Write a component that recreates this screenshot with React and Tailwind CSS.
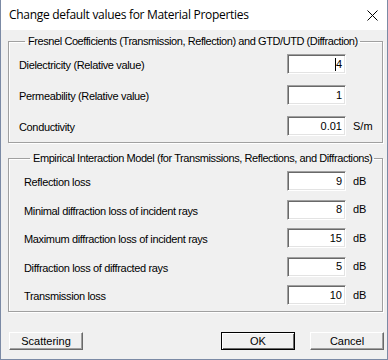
import React from "react";

const font = { fontFamily: '"Liberation Sans", Arial, sans-serif' };

// sunken edit box like the classic Win32 control
const EditBox = ({ value, caret }) => (
  <div className="w-[59px] h-[20px] bg-white border border-t-[#a0a0a0] border-l-[#a0a0a0] border-b-white border-r-white shadow-[inset_1px_1px_0_#696969,inset_-1px_-1px_0_#e3e3e3] flex items-center justify-end pr-[3px] text-[11px] text-black">
    {caret && <span className="inline-block w-[1px] h-[13px] bg-black" />}
    <span>{value}</span>
  </div>
);

const Row = ({ label, value, unit, caret }) => (
  <div className="flex items-center h-[20px]">
    <div className="flex-1 text-[11px] tracking-[-0.35px] whitespace-nowrap text-black pt-[3px]">
      {label}
    </div>
    <EditBox value={value} caret={caret} />
    <div className="w-[36px] pl-[7px] text-[11px] text-black">{unit}</div>
  </div>
);

const GroupBox = ({ title, children, className }) => (
  <fieldset
    className={
      "border border-[#a0a0a0] shadow-[inset_1px_1px_0_#fff,1px_1px_0_#fff] " +
      className
    }
  >
    <legend className="ml-[6px] pl-[3px] pr-[2px] text-[11px] leading-[13px] tracking-[-0.42px] whitespace-nowrap text-black">
      {title}
    </legend>
    {children}
  </fieldset>
);

const Button = ({ children, isDefault }) => (
  <button
    className={
      "w-[74px] h-[18px] bg-[#f0f0f0] text-[11px] text-black flex items-center justify-center border " +
      (isDefault
        ? "border-black shadow-[inset_1px_1px_0_#fff,inset_-1px_-1px_0_#696969]"
        : "border-t-white border-l-white border-b-[#696969] border-r-[#696969] shadow-[inset_-1px_-1px_0_#a0a0a0]")
    }
  >
    {children}
  </button>
);

export default function App() {
  const fresnel = [
    { label: "Dielectricity (Relative value)", value: "4", caret: true },
    { label: "Permeability (Relative value)", value: "1" },
    { label: "Conductivity", value: "0.01", unit: "S/m" },
  ];
  const empirical = [
    { label: "Reflection loss", value: "9" },
    { label: "Minimal diffraction loss of incident rays", value: "8" },
    { label: "Maximum diffraction loss of incident rays", value: "15" },
    { label: "Diffraction loss of diffracted rays", value: "5" },
    { label: "Transmission loss", value: "10" },
  ];

  return (
    <div
      className="w-[388px] h-[360px] flex flex-col bg-[#f0f0f0] border-l border-r border-b border-[#7b8aa5] overflow-hidden"
      style={font}
    >
      {/* Title bar */}
      <div className="h-[30px] shrink-0 bg-white flex items-center justify-between pl-[8px] pr-[9px]">
        <span
          className="text-[12px] tracking-[-0.3px] text-black"
          style={{ fontFamily: '"Open Sans", "Noto Sans", sans-serif' }}
        >
          Change default values for Material Properties
        </span>
        <svg width="11" height="11" viewBox="0 0 11 11">
          <path d="M0.5 0.5 L10.5 10.5 M10.5 0.5 L0.5 10.5" stroke="#000" strokeWidth="1" />
        </svg>
      </div>

      <div className="flex flex-col pl-[7px] pr-[4px]">
        <GroupBox
          title="Fresnel Coefficients (Transmission, Reflection) and GTD/UTD (Diffraction)"
          className="mt-[5px] pl-[10px] pt-[6px] pb-[6px] flex flex-col gap-[11px]"
        >
          {fresnel.map((r) => (
            <Row key={r.label} {...r} />
          ))}
        </GroupBox>

        <GroupBox
          title="Empirical Interaction Model (for Transmissions, Reflections, and Diffractions)"
          className="mt-[9px] pl-[15px] pt-[6px] pb-[6px] flex flex-col gap-[8.5px]"
        >
          {empirical.map((r) => (
            <Row key={r.label} {...r} unit="dB" />
          ))}
        </GroupBox>

        <div className="flex mt-[20px] pl-[1px] -mr-[1px]">
          <Button>Scattering</Button>
          <div className="flex-1" />
          <Button isDefault>OK</Button>
          <div className="w-[15px]" />
          <Button>Cancel</Button>
        </div>
      </div>
    </div>
  );
}
